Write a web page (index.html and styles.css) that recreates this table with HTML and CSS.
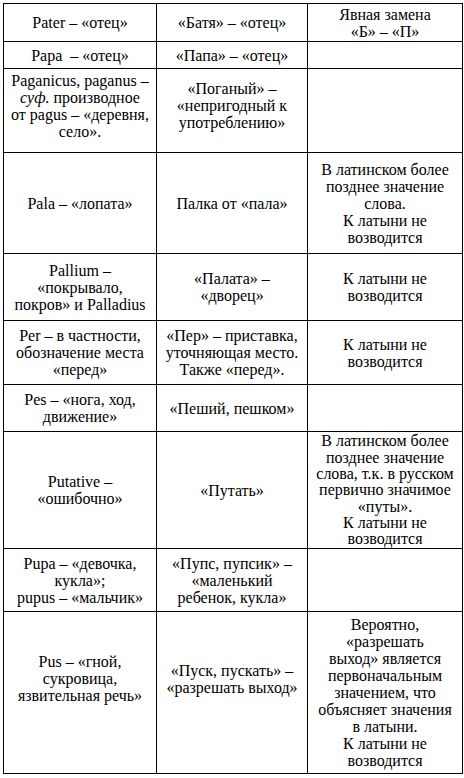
FILE: index.html
```html
<!DOCTYPE html>
<html lang="ru">
<head>
<meta charset="utf-8">
<title>Таблица</title>
<link rel="stylesheet" href="styles.css">
</head>
<body>
<table class="words">
  <colgroup>
    <col class="c1">
    <col class="c2">
    <col class="c3">
  </colgroup>
  <tbody>
    <tr class="r1">
      <td>Pater – «отец»</td>
      <td>«Батя» – «отец»</td>
      <td>Явная замена<br>«Б» – «П»</td>
    </tr>
    <tr class="r2">
      <td>Papa&nbsp; – «отец»</td>
      <td>«Папа» – «отец»</td>
      <td></td>
    </tr>
    <tr class="r3">
      <td class="lift-s">Paganicus, paganus –<br><i>суф.</i> производное<br>от pagus – «деревня,<br>село».</td>
      <td class="lift-s">«Поганый» –<br>«непригодный к<br>употреблению»</td>
      <td></td>
    </tr>
    <tr class="r4">
      <td>Pala – «лопата»</td>
      <td>Палка от «пала»</td>
      <td>В латинском более<br>позднее значение<br>слова.<br>К латыни не<br>возводится</td>
    </tr>
    <tr class="r5">
      <td>Pallium –<br>«покрывало,<br>покров» и Palladius</td>
      <td>«Палата» –<br>«дворец»</td>
      <td>К латыни не<br>возводится</td>
    </tr>
    <tr class="r6">
      <td>Per – в частности,<br>обозначение места<br>«перед»</td>
      <td>«Пер» – приставка,<br>уточняющая место.<br>Также «перед».</td>
      <td>К латыни не<br>возводится</td>
    </tr>
    <tr class="r7">
      <td>Pes – «нога, ход,<br>движение»</td>
      <td>«Пеший, пешком»</td>
      <td></td>
    </tr>
    <tr class="r8">
      <td>Putative –<br>«ошибочно»</td>
      <td>«Путать»</td>
      <td class="tight">В латинском более<br>позднее значение<br>слова, т.к. в русском<br>первично значимое<br>«путы».<br>К латыни не<br>возводится</td>
    </tr>
    <tr class="r9">
      <td>Pupa – «девочка,<br>кукла»;<br>pupus – «мальчик»</td>
      <td>«Пупс, пупсик» –<br>«маленький<br>ребенок, кукла»</td>
      <td></td>
    </tr>
    <tr class="r10">
      <td class="lift-l">Pus – «гной,<br>сукровица,<br>язвительная речь»</td>
      <td class="lift-l">«Пуск, пускать» –<br>«разрешать выход»</td>
      <td>Вероятно,<br>«разрешать<br>выход» является<br>первоначальным<br>значением, что<br>объясняет значения<br>в латыни.<br>К латыни не<br>возводится</td>
    </tr>
  </tbody>
</table>
</body>
</html>
```

FILE: styles.css
```css
html, body {
  margin: 0;
  padding: 0;
  background: #ffffff;
}

body {
  padding: 3px 0 0 3px;
  color: #000000;
}

.words {
  border-collapse: collapse;
  table-layout: fixed;
  width: 459px;
  font-family: "Liberation Serif", "Times New Roman", serif;
  font-size: 16px;
  line-height: 17px;
}

.words .c1 { width: 153px; }
.words .c2 { width: 151px; }
.words .c3 { width: 155px; }

.words td {
  border: 1px solid #000000;
  padding: 0 2px;
  text-align: center;
  vertical-align: middle;
  white-space: nowrap;
}

.words td.lift-s { padding-bottom: 10px; }
.words td.lift-l { padding-bottom: 28px; }
.words td.tight { line-height: 16.3px; padding-top: 1px; }

.words .r1 { height: 38px; }
.words .r2 { height: 27px; }
.words .r3 { height: 84px; }
.words .r4 { height: 101px; }
.words .r5 { height: 67px; }
.words .r6 { height: 64px; }
.words .r7 { height: 47px; }
.words .r8 { height: 117px; }
.words .r9 { height: 63px; }
.words .r10 { height: 162px; }
```
